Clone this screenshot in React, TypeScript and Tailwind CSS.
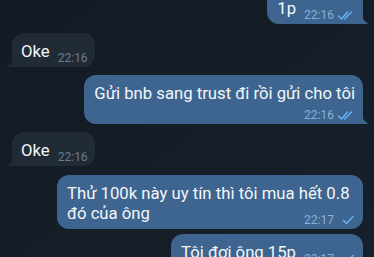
import React from 'react';

type Status = 'double' | 'single';

function Ticks({ status }: { status: Status }) {
  return (
    <svg width="18" height="11" viewBox="0 0 18 11" fill="none" stroke="#6cb2f2" strokeWidth="1.4" strokeLinecap="round" strokeLinejoin="round">
      {status === 'double' ? (
        <>
          <path d="M1.5 6 L4.5 9 L10.5 2" />
          <path d="M7.5 9 L14.5 2" />
        </>
      ) : (
        <path d="M6.5 5.5 L9.5 8.5 L16 1.5" />
      )}
    </svg>
  );
}

function Tail({ side, color }: { side: 'in' | 'out'; color: string }) {
  if (side === 'out') {
    return (
      <svg className="absolute bottom-0 right-[-6px]" width="8" height="14" viewBox="0 0 8 14">
        <path d="M0 0 C0.5 7 2.5 11 6.5 13 Q7.5 14 6 14 H0 Z" fill={color} />
      </svg>
    );
  }
  return (
    <svg className="absolute bottom-0 left-[-6px]" width="8" height="14" viewBox="0 0 8 14">
      <path d="M8 0 C7.5 7 5.5 11 1.5 13 Q0.5 14 2 14 H8 Z" fill={color} />
    </svg>
  );
}

interface Msg {
  side: 'in' | 'out';
  text: string;
  time: string;
  status?: Status;
  tail?: boolean;
  below?: boolean;
  mt: string;
}

const messages: Msg[] = [
  { side: 'out', text: '1p', time: '22:16', status: 'double', tail: true, mt: 'mt-[-10px]' },
  { side: 'in', text: 'Oke', time: '22:16', tail: true, mt: 'mt-[9px]' },
  { side: 'out', text: 'Gửi bnb sang trust đi rồi gửi cho tôi', time: '22:16', status: 'double', tail: true, below: true, mt: 'mt-[8px]' },
  { side: 'in', text: 'Oke', time: '22:16', tail: true, mt: 'mt-[8px]' },
  { side: 'out', text: 'Thử 100k này uy tín thì tôi mua hết 0.8 đó của ông', time: '22:17', status: 'single', mt: 'mt-[9px]' },
  { side: 'out', text: 'Tôi đợi ông 15p', time: '22:17', status: 'single', tail: true, mt: 'mt-[5px]' },
];

function Bubble({ m }: { m: Msg }) {
  const out = m.side === 'out';
  const color = out ? '#3d6590' : '#212b36';
  const timeCls = out ? 'text-[#8ab0d8]' : 'text-[#6b7b8b]';

  const timeRow = (
    <span className={`flex items-center gap-[3px] text-[12px] leading-[14px] ${timeCls}`}>
      {m.time}
      {m.status && <Ticks status={m.status} />}
    </span>
  );

  return (
    <div
      className={`relative max-w-[306px] pt-[9px] text-[16.7px] text-[#f4f6f8] ${m.mt} ${
        out ? 'self-end mr-[11px] pl-[10px] pr-[8px] bg-[#3d6590]' : 'self-start ml-[12px] pl-[9px] pr-[7px] bg-[#212b36]'
      } ${m.below ? 'pb-[2px]' : 'pb-[5px]'} rounded-[12px] ${
        m.tail ? (out ? 'rounded-br-none' : 'rounded-bl-none') : ''
      }`}
    >
      {m.below ? (
        <>
          <p className="leading-[20px]">{m.text}</p>
          <div className="mt-[4px] flex justify-end">{timeRow}</div>
        </>
      ) : (
        <>
          <p className="leading-[15px]">
            <span className="leading-[20px]">{m.text}</span>
            <span className={`inline-block h-0 ${out ? 'w-[59px]' : 'w-[38px]'}`} />
          </p>
          <div className={`absolute bottom-[2px] ${out ? 'right-[8px]' : 'right-[7px]'}`}>{timeRow}</div>
        </>
      )}
      {m.tail && <Tail side={m.side} color={color} />}
    </div>
  );
}

export default function App() {
  return (
    <div className="flex h-[257px] w-[374px] flex-col overflow-hidden bg-gradient-to-br from-[#131a23] to-[#17202a] font-['Roboto',sans-serif]">
      {messages.map((m, i) => (
        <Bubble key={i} m={m} />
      ))}
    </div>
  );
}
